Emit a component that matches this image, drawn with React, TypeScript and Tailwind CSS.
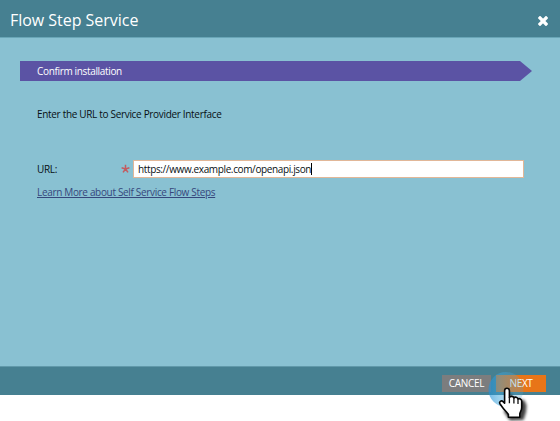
import React from "react";

function CloseIcon() {
  return (
    <svg className="mt-px" width="10" height="10" viewBox="0 0 10 10" aria-label="Close">
      <path d="M2 2 8 8M8 2 2 8" stroke="#fff" strokeWidth="3.3" strokeLinecap="square" />
    </svg>
  );
}

function Pointer() {
  return (
    <svg className="absolute left-[480px] top-[365px]" width="60" height="56" viewBox="0 0 60 56">
      <defs>
        <linearGradient id="halo" x1="0" y1="0" x2="1" y2="0">
          <stop offset="0" stopColor="#2090d8" stopOpacity="0.62" />
          <stop offset="0.3" stopColor="#3aa4dc" stopOpacity="0.5" />
          <stop offset="1" stopColor="#5aa5c8" stopOpacity="0.24" />
        </linearGradient>
        <filter id="soft" x="-40%" y="-40%" width="180%" height="180%">
          <feGaussianBlur stdDeviation="1.6" />
        </filter>
      </defs>
      <circle cx="26" cy="24.5" r="17.5" fill="url(#halo)" />
      <path
        d="M31 28 33 34 44 35 46.5 40 46 47 43.5 55 30 55.5 24 47Z"
        fill="#000"
        opacity="0.75"
        filter="url(#soft)"
      />
      <path
        d="M24.6 25.8C24.6 22.4 29.4 22.4 29.4 25.8V32.5C30 30.8 33.6 31 33.9 33C35 31.5 37.8 32.2 38 34.2C39.3 33 41.7 34 41.7 36.2V42.5C41.7 45.5 40.2 46.5 39.8 49V52.2H28.4V49.5C27 47 24.2 45 22.4 42.3L20.1 39C18.6 36.6 21.4 35 23.1 36.6L24.6 38.2Z"
        fill="#fff"
        stroke="#050505"
        strokeWidth="1.6"
        strokeLinejoin="round"
      />
      <path d="M29.4 32V38.2M33.9 33V38.5M38 34.2V39" stroke="#111" strokeWidth="1.3" />
    </svg>
  );
}

export default function App() {
  return (
    <div className="relative h-[421px] w-[560px] overflow-hidden bg-white font-['Open_Sans','Noto_Sans',sans-serif] text-[10px] whitespace-nowrap text-[#081014]">
      <div className="flex h-[395px] flex-col bg-[#89c1d2]">
        <header className="flex h-[38px] shrink-0 items-center justify-between border-b border-[#69a6b7] bg-[#468091] pr-3 pl-[10px] pt-[3px]">
          <h1 className="text-[16px] leading-[22px] tracking-[-0.03px] text-white">Flow Step Service</h1>
          <CloseIcon />
        </header>
        <main className="flex-1 pl-5">
          <div className="mt-[23px] flex h-5 w-[512px] items-center bg-[#5b53a4] pl-[17px] tracking-[-0.34px] text-white [clip-path:polygon(0_0,500px_0,512px_10px,500px_20px,0_20px)]">
            Confirm installation
          </div>
          <div className="pl-[17px]">
            <p className="mt-[25px] h-4 leading-4 tracking-[-0.32px]">Enter the URL to Service Provider Interface</p>
            <div className="mt-[38px] flex h-[18px] items-center">
              <label className="w-[84px] tracking-[-0.3px]">URL:</label>
              <svg className="mr-[3px]" width="9" height="10" viewBox="0 0 9 10">
                <path d="M4.5 5V.8M4.5 5 .6 3.8M4.5 5 8.4 3.8M4.5 5 2 8.4M4.5 5 7 8.4" stroke="#c35b60" strokeWidth="1.5" />
              </svg>
              <div className="flex h-[18px] w-[391px] items-center border border-[#e1b798] bg-white pl-[4px]">
                <span className="tracking-[-0.37px]">https://www.example.com/openapi.json</span>
                <span className="h-3 w-px bg-black" />
              </div>
            </div>
            <a className="mt-[6px] block h-4 leading-4 tracking-[-0.33px] text-[#36477c] underline underline-offset-1">Learn More about Self Service Flow Steps</a>
          </div>
        </main>
        <footer className="flex h-[29px] shrink-0 items-center justify-end gap-[5px] border-t border-[#6099aa] bg-[#468091] pt-[5px] pr-[14px] text-white">
          <button className="h-[17px] w-[49px] bg-[#7c7d7e] tracking-[-0.3px]">CANCEL</button>
          <button className="h-[17px] w-[50px] bg-[#e87518] tracking-[-0.3px]">NEXT</button>
        </footer>
      </div>
      <Pointer />
    </div>
  );
}
